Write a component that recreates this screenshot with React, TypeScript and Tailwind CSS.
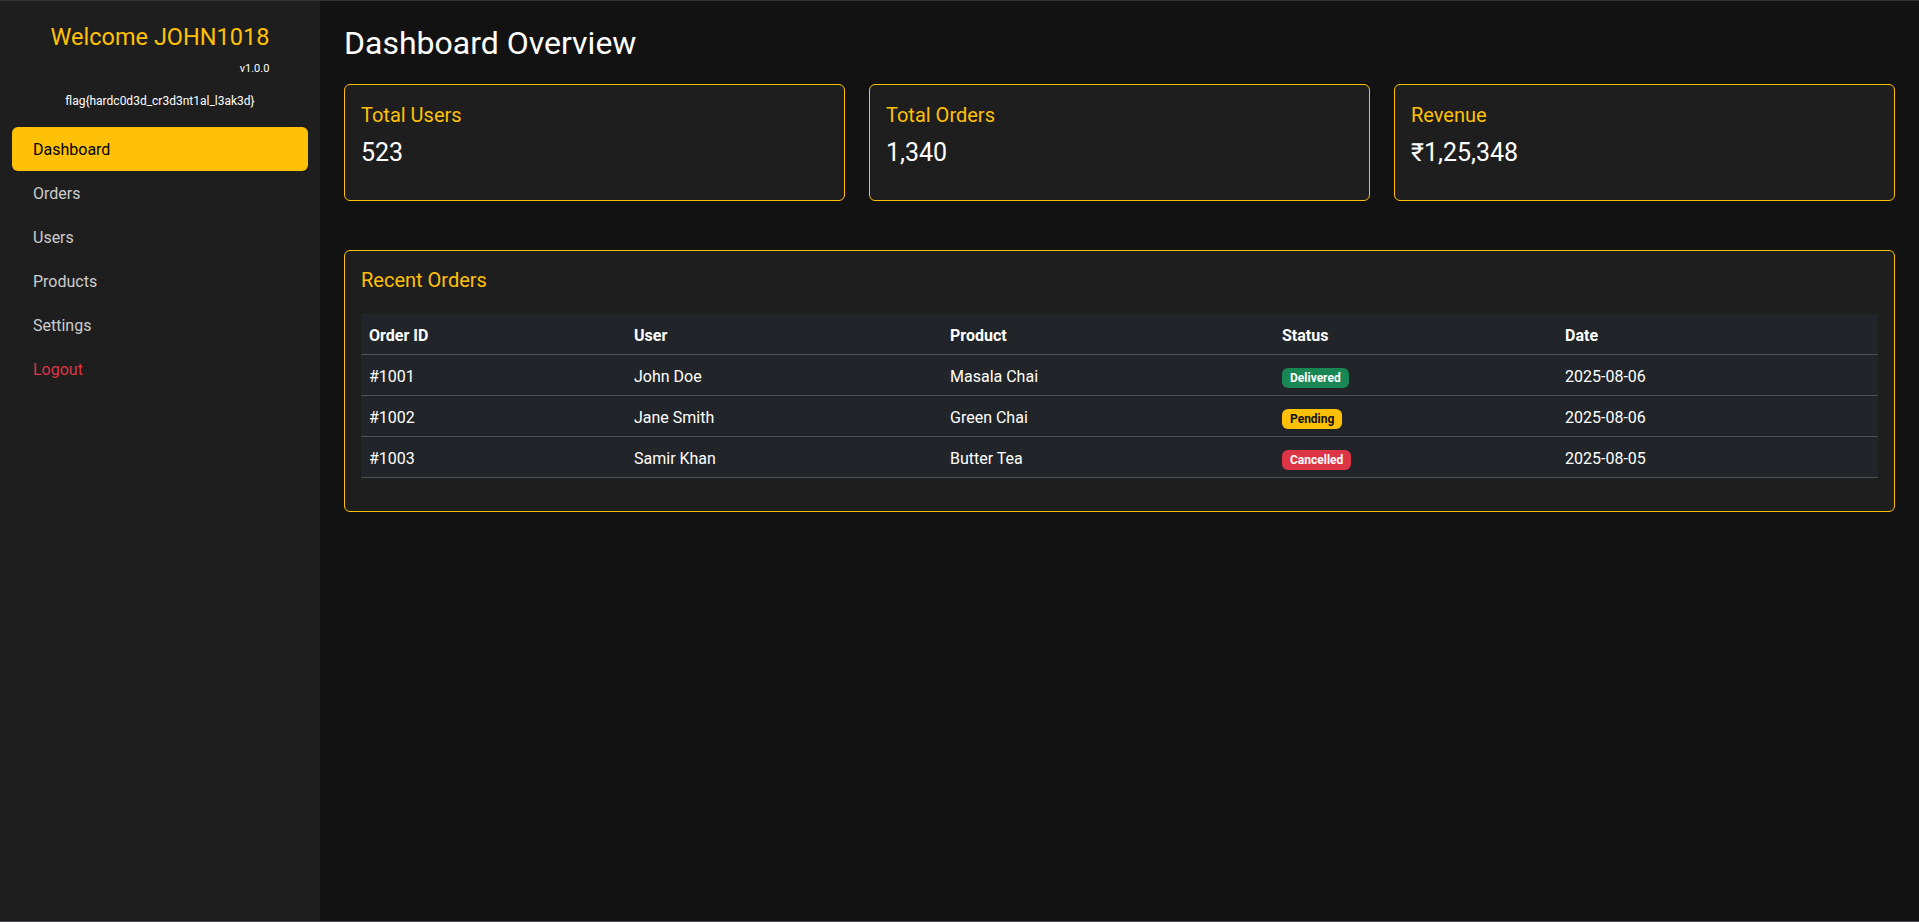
import React from "react";

const font = { fontFamily: 'Roboto, "Noto Sans", "Liberation Sans", sans-serif' };

const navItems = ["Dashboard", "Orders", "Users", "Products", "Settings"];

const orders = [
  { id: "#1001", user: "John Doe", product: "Masala Chai", status: "Delivered", date: "2025-08-06" },
  { id: "#1002", user: "Jane Smith", product: "Green Chai", status: "Pending", date: "2025-08-06" },
  { id: "#1003", user: "Samir Khan", product: "Butter Tea", status: "Cancelled", date: "2025-08-05" },
];

function Badge({ status }: { status: string }) {
  if (status === "Delivered")
    return (
      <span className="inline-block align-middle rounded-[6px] bg-[#198754] px-[8px] py-[4px] text-[12px] font-bold leading-none text-white">
        Delivered
      </span>
    );
  if (status === "Pending")
    return (
      <span className="inline-block align-middle rounded-[6px] bg-[#ffc107] px-[8px] py-[4px] text-[12px] font-bold leading-none text-[#111]">
        Pending
      </span>
    );
  return (
    <span className="inline-block align-middle rounded-[6px] bg-[#dc3545] px-[8px] py-[4px] text-[12px] font-bold leading-none text-white">
      Cancelled
    </span>
  );
}

function StatCard({ title, value }: { title: string; value: string }) {
  return (
    <div className="rounded-[6px] border border-[#ffc107] bg-[#1e1e1e] px-4 pt-[18px] pb-[32px]">
      <div className="text-[20px] leading-[24px] text-[#ffc107]">{title}</div>
      <div className="mt-[11px] text-[25px] leading-[30px] text-white">{value}</div>
    </div>
  );
}

export default function App() {
  return (
    <div
      style={font}
      className="flex h-screen w-full overflow-hidden border-t border-b border-t-[#34343a] border-b-[#4a4a4e] bg-[#121212]"
    >
      <aside className="flex w-[320px] shrink-0 flex-col bg-[#1e1e1e]">
        <div className="mx-auto mt-[22px] w-fit">
          <div className="text-[23.5px] leading-[29px] text-[#ffc107]">Welcome JOHN1018</div>
          <div className="mt-[9px] text-right text-[11px] leading-[16px] text-white">v1.0.0</div>
        </div>
        <div className="mt-[15px] text-center text-[12px] leading-[18px] text-white">
          flag{"{"}hardc0d3d_cr3d3nt1al_l3ak3d{"}"}
        </div>
        <nav className="mt-[17px] flex flex-col px-3">
          {navItems.map((item, i) => (
            <div
              key={item}
              className={
                i === 0
                  ? "flex h-[44px] items-center rounded-[6px] bg-[#ffc107] pl-[21px] pt-[2px] text-[16px] text-black"
                  : "flex h-[44px] items-center rounded-[6px] pl-[21px] pt-[2px] text-[16px] text-[#cccccc]"
              }
            >
              {item}
            </div>
          ))}
          <div className="flex h-[44px] items-center pl-[21px] pt-[2px] text-[16px] text-[#dc3545]">Logout</div>
        </nav>
      </aside>

      <main className="flex-1 px-6 pt-[23px]">
        <h2 className="mb-[22px] text-[32px] leading-[38px] text-white">Dashboard Overview</h2>

        <div className="grid grid-cols-3 gap-6">
          <StatCard title="Total Users" value="523" />
          <StatCard title="Total Orders" value="1,340" />
          <StatCard title="Revenue" value="₹1,25,348" />
        </div>

        <div className="mt-[49px] rounded-[6px] border border-[#ffc107] bg-[#1e1e1e] px-4 pt-[17px] pb-[33px]">
          <div className="mb-[22px] text-[20px] leading-[24px] text-[#ffc107]">Recent Orders</div>
          <table className="w-full table-fixed border-collapse bg-[#212529] text-left text-[16px] leading-[24px] text-white">
            <thead>
              <tr className="border-b border-[#4d5154]">
                <th className="w-[265px] px-2 pt-[10px] pb-[6px] font-bold">Order ID</th>
                <th className="w-[316px] px-2 pt-[10px] pb-[6px] font-bold">User</th>
                <th className="w-[332px] px-2 pt-[10px] pb-[6px] font-bold">Product</th>
                <th className="w-[283px] px-2 pt-[10px] pb-[6px] font-bold">Status</th>
                <th className="px-2 pt-[10px] pb-[6px] font-bold">Date</th>
              </tr>
            </thead>
            <tbody>
              {orders.map((o) => (
                <tr key={o.id} className="border-b border-[#4d5154]">
                  <td className="h-[41px] px-2 pt-[10px] pb-[6px]">{o.id}</td>
                  <td className="px-2 pt-[10px] pb-[6px]">{o.user}</td>
                  <td className="px-2 pt-[10px] pb-[6px]">{o.product}</td>
                  <td className="px-2 pt-[10px] pb-[6px]">
                    <Badge status={o.status} />
                  </td>
                  <td className="px-2 pt-[10px] pb-[6px]">{o.date}</td>
                </tr>
              ))}
            </tbody>
          </table>
        </div>
      </main>
    </div>
  );
}
